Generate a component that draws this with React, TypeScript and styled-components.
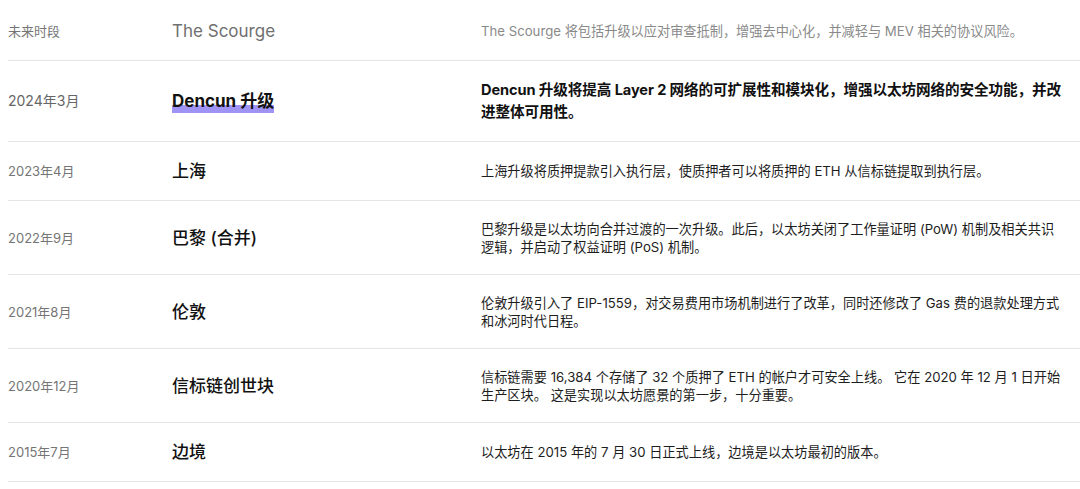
import React from "react";
import styled, { createGlobalStyle } from "styled-components";

const Global = createGlobalStyle`
  html, body { margin: 0; padding: 0; background: #ffffff; }
  body { font-family: Inter, "Noto Sans CJK SC", sans-serif; -webkit-font-smoothing: antialiased; }
`;

const Table = styled.div`
  display: flex;
  flex-direction: column;
  padding-left: 8px;
`;

const Row = styled.div<{ $h: number; $first?: boolean }>`
  display: grid;
  grid-template-columns: 164px 309px 582px;
  align-items: center;
  box-sizing: border-box;
  min-height: ${(p) => p.$h}px;
  padding-top: ${(p) => (p.$first ? "2px" : "0")};
  border-bottom: 1px solid #e6e6e6;
`;

const DateCell = styled.div<{ $bold?: boolean }>`
  font-size: ${(p) => (p.$bold ? "14px" : "13px")};
  line-height: 18px;
  color: ${(p) => (p.$bold ? "#666666" : "#757575")};
`;

const Title = styled.div<{ $muted?: boolean; $bold?: boolean }>`
  font-size: 17px;
  line-height: 22px;
  font-weight: ${(p) => (p.$bold ? 700 : p.$muted ? 400 : 500)};
  color: ${(p) => (p.$muted ? "#707070" : "#111111")};
`;

const Highlight = styled.span`
  box-shadow: inset 0 -8px 0 #a093f6;
  padding-bottom: 2px;
`;

const Desc = styled.div<{ $muted?: boolean; $bold?: boolean }>`
  font-size: ${(p) => (p.$bold ? "14.6px" : "13.2px")};
  line-height: ${(p) => (p.$bold ? "22px" : "18px")};
  font-weight: ${(p) => (p.$bold ? 700 : 400)};
  letter-spacing: ${(p) => (p.$bold ? "-0.1px" : "0")};
  color: ${(p) => (p.$muted ? "#8a8a8a" : p.$bold ? "#111111" : "#1d1d1d")};
`;

type Item = {
  date: string;
  title: React.ReactNode;
  desc: string;
  h: number;
  kind?: "muted" | "bold";
};

const items: Item[] = [
  { date: "未来时段", title: "The Scourge", desc: "The Scourge 将包括升级以应对审查抵制，增强去中心化，并减轻与 MEV 相关的协议风险。", h: 61, kind: "muted" },
  { date: "2024年3月", title: <Highlight>Dencun 升级</Highlight>, desc: "Dencun 升级将提高 Layer 2 网络的可扩展性和模块化，增强以太坊网络的安全功能，并改进整体可用性。", h: 81, kind: "bold" },
  { date: "2023年4月", title: "上海", desc: "上海升级将质押提款引入执行层，使质押者可以将质押的 ETH 从信标链提取到执行层。", h: 59 },
  { date: "2022年9月", title: "巴黎 (合并)", desc: "巴黎升级是以太坊向合并过渡的一次升级。此后，以太坊关闭了工作量证明 (PoW) 机制及相关共识逻辑，并启动了权益证明 (PoS) 机制。", h: 74 },
  { date: "2021年8月", title: "伦敦", desc: "伦敦升级引入了 EIP-1559，对交易费用市场机制进行了改革，同时还修改了 Gas 费的退款处理方式和冰河时代日程。", h: 74 },
  { date: "2020年12月", title: "信标链创世块", desc: "信标链需要 16,384 个存储了 32 个质押了 ETH 的帐户才可安全上线。 它在 2020 年 12 月 1 日开始生产区块。 这是实现以太坊愿景的第一步，十分重要。", h: 74 },
  { date: "2015年7月", title: "边境", desc: "以太坊在 2015 年的 7 月 30 日正式上线，边境是以太坊最初的版本。", h: 59 },
];

export default function App() {
  return (
    <>
      <Global />
      <Table>
        {items.map((it, i) => (
          <Row key={i} $h={it.h} $first={i === 0}>
            <DateCell $bold={it.kind === "bold"}>{it.date}</DateCell>
            <Title $muted={it.kind === "muted"} $bold={it.kind === "bold"}>
              {it.title}
            </Title>
            <Desc $muted={it.kind === "muted"} $bold={it.kind === "bold"}>
              {it.desc}
            </Desc>
          </Row>
        ))}
      </Table>
    </>
  );
}
